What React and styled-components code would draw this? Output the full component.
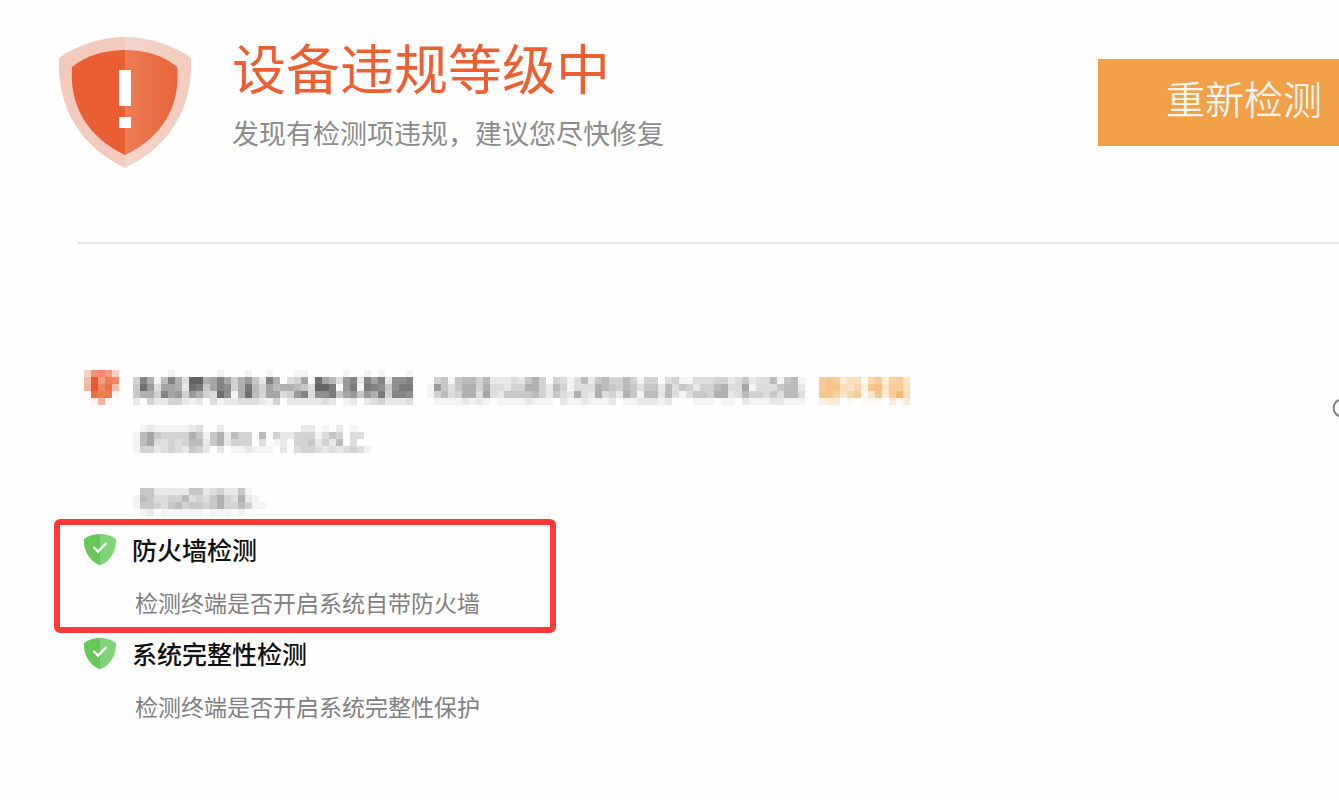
import React from 'react'
import styled, { createGlobalStyle } from 'styled-components';

// every digit is the strength of one 7px cell
const CELL = 7;
const BADGE = ['4ab94', '6f9cb', '7fbd6', '0dcc1', '01710'];
const NAME = [
    '0000010000001000100100011000001001010001',
    '4b716b73ee78b847952b703480d8639b2b8b2aab',
    '5d938872dc58ba47c648677653eec09c1cba5acc',
    '5774b8949743da17d6488349b3aac589597c4bba',
    '2042244212031223332140222223201202342223',
];
const NOTE = [
    '045156646222325740431362564464144034113334423523361561',
    '195357747332447742641333765465355263542446733813335662',
    '146347738325555642532732734275166263135547723644353663',
    '011112121011112111021121112011222120001110110211122111',
];
const REPAIR = ['8983551683784', '89954629a4885', '99746814938b5', '2330101110313'];
const LINE_ONE = [
    '0121111123002000000000002201020100',
    '1685444475157264406042244413540330',
    '1683343466257244403012044524260300',
    '1442343254202011211102034432323431',
];
const LINE_TWO = [
    '0552222255234225100',
    '1653344634357437210',
    '1554356455457446411',
    '0120111111011101000',
];

const Mosaic = ({ rows, color = '#000', step = 23 }) => {
    const width = rows[0].length * CELL;
    return (
        <MosaicSvg width={width} height={rows.length * CELL} shapeRendering="crispEdges" aria-hidden="true">
            {rows.map((row, y) => row.split('').map((level, x) => (
                level !== '0' && (
                    <rect
                        key={`${x}-${y}`}
                        x={x * CELL}
                        y={y * CELL}
                        width={CELL}
                        height={CELL}
                        fill={color}
                        fillOpacity={parseInt(level, 16) / step}
                    />
                )
            )))}
        </MosaicSvg>
    )
}

const WarningShield = () => (
    <svg width="132" height="132" viewBox="0 0 132 132" aria-hidden="true">
        <defs>
            <linearGradient id="shine" x1="0" x2="1" y1="0" y2="0">
                <stop offset="0" stopColor="#eb7d57" />
                <stop offset="1" stopColor="#e96337" />
            </linearGradient>
            <linearGradient id="rim" x1="0" x2="1" y1="0" y2="0">
                <stop offset="0" stopColor="#f3d5ca" />
                <stop offset="1" stopColor="#f2cbbe" />
            </linearGradient>
        </defs>
        <path d="M66 0C42 0 18 8 0 21C-2 72 22 110 66 131Z" fill="#f2cbbe" />
        <path d="M66 0C90 0 114 8 132 21C134 72 110 110 66 131Z" fill="url(#rim)" />
        <path d="M66 13C47 13 28 18 13 30C10 70 30 101 66 118Z" fill="#e95e32" />
        <path d="M66 13C85 13 104 18 118 30C122 70 102 101 66 118Z" fill="url(#shine)" />
        <path d="M60 33h12v36h-12zM60 80h12v11h-12z" fill="#fff" />
    </svg>
)

const PassShield = () => (
    <svg width="32" height="32" viewBox="0 0 32 32" aria-hidden="true">
        <path d="M16 0C10 0 4.500 1.500 0 5C-.5 17.500 5 26.500 16 31.500Z" fill="#68c75b" />
        <path d="M16 0C22 0 27.500 1.500 32 5C32.500 17.500 27 26.500 16 31.500Z" fill="#81d37b" />
        <path d="M9.500 13L14 17.500L22.500 9" fill="none" stroke="#fff" strokeWidth="2.400" />
    </svg>
)

const Check = ({ title, desc }) => (
    <>
        <CheckTitle>
            <PassShield />
            <h2>{title}</h2>
        </CheckTitle>
        <CheckDesc>{desc}</CheckDesc>
    </>
)

const App = () => {
    return (
        <Wrap>
            <GlobalStyle />
            <Header>
                <WarningShield />
                <Summary>
                    <h1>设备违规等级中</h1>
                    <p>发现有检测项违规，建议您尽快修复</p>
                </Summary>
                <Button type="button">重新检测</Button>
            </Header>
            <Divider />
            <Hidden>
                <HiddenHead>
                    <Mosaic rows={BADGE} color="#ea5a2d" step={15} />
                    <Mosaic rows={NAME} />
                    <Shifted><Mosaic rows={NOTE} /></Shifted>
                    <Shifted><Mosaic rows={REPAIR} color="#f0a040" step={15} /></Shifted>
                    <Ring width="20" height="20" viewBox="0 0 20 20" aria-hidden="true">
                        <circle cx="10" cy="10" r="8.500" fill="none" stroke="#777" strokeWidth="1.800" />
                    </Ring>
                </HiddenHead>
                <HiddenLines>
                    <Mosaic rows={LINE_ONE} />
                    <Mosaic rows={LINE_TWO} />
                </HiddenLines>
            </Hidden>
            <Marked>
                <Check title="防火墙检测" desc="检测终端是否开启系统自带防火墙" />
            </Marked>
            <Plain>
                <Check title="系统完整性检测" desc="检测终端是否开启系统完整性保护" />
            </Plain>
        </Wrap>
    )
}

export default App;

const GlobalStyle = createGlobalStyle`
*{
    box-sizing:border-box;
}
body{
    margin:0;
    background:#fefefe;
    font-family:'Noto Sans CJK SC', sans-serif;
}
h1, h2, p{
    margin:0;
    font-weight:400;
}
`
const Wrap = styled.main`
min-height:100vh;
padding-top:37px;
overflow:hidden;
`
const Header = styled.header`
display:flex;
align-items:flex-start;
padding:0 0 73px 59px;
svg{
    flex:none;
}
`
const Summary = styled.div`
flex:1;
margin-left:41px;
white-space:nowrap;
h1{
    font-size:54px;
    line-height:60px;
    color:#eb5f32;
}
p{
    margin-top:18px;
    font-size:27px;
    line-height:36px;
    color:#8c8c8c;
}
`
const Button = styled.button`
flex:none;
height:87px;
margin-top:22px;
padding:0 17px 12px 68px;
border:none;
background:#f0a046;
color:#f6f3f0;
font-family:inherit;
font-size:39px;
font-weight:350;
cursor:pointer;
`
const Divider = styled.hr`
height:2px;
margin:0 0 0 78px;
border:none;
background:#e6e6e6;
`
const MosaicSvg = styled.svg`
display:block;
flex:none;
`
const Hidden = styled.section`
padding:126px 0 3px 84px;
`
const HiddenHead = styled.div`
display:flex;
align-items:flex-start;
gap:14px;
`
const Shifted = styled.div`
padding-top:7px;
`
const Ring = styled.svg`
flex:none;
margin:28px -13px 0 auto;
`
const HiddenLines = styled.div`
display:flex;
flex-direction:column;
gap:35px;
margin:7px 0 0 49px;
`
const Marked = styled.section`
width:502px;
margin-left:54px;
padding:9px 0 10px 24px;
border:6px solid #fd3838;
border-radius:6px;
`
const Plain = styled.section`
padding:5px 0 0 84px;
`
const CheckTitle = styled.div`
display:flex;
align-items:flex-start;
gap:16px;
h2{
    font-size:25px;
    line-height:30px;
    font-weight:500;
    color:#111;
}
`
const CheckDesc = styled.p`
margin-top:21px;
padding-left:51px;
font-size:23px;
line-height:30px;
color:#808080;
`
